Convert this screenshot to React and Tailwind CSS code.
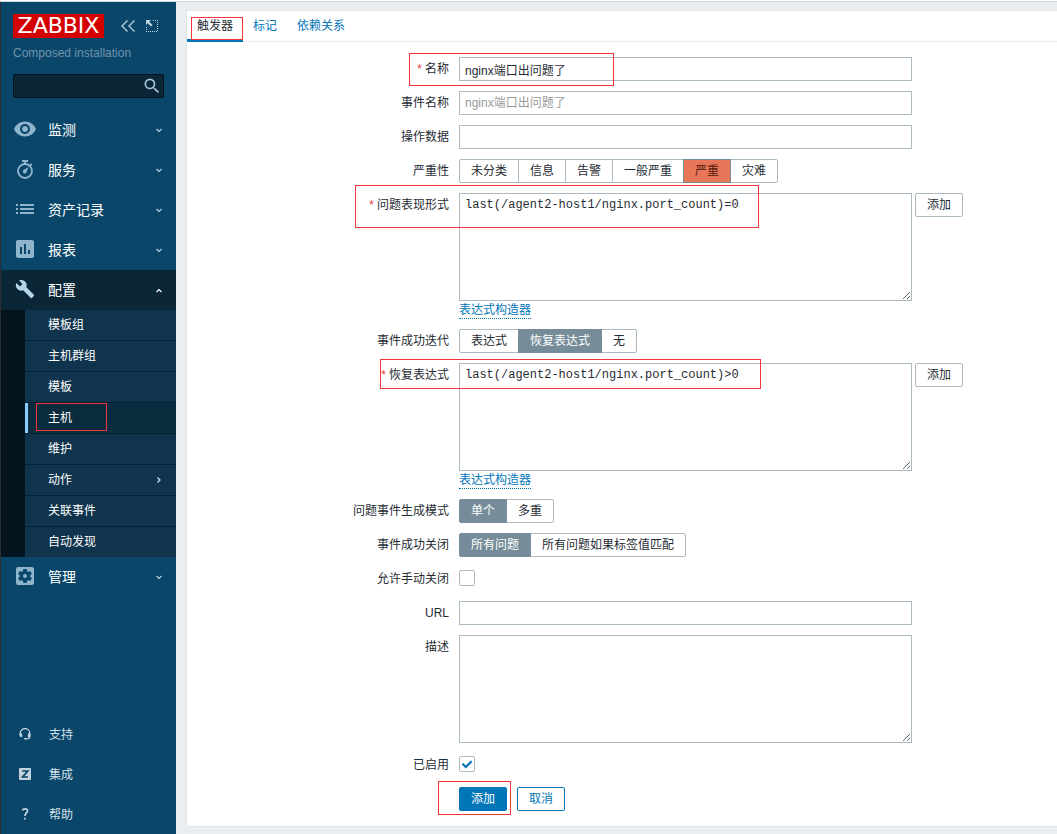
import React from "react";
import { MdVisibility, MdPoll, MdBuild, MdSettingsApplications, MdSearch } from "react-icons/md";

const FIELD = "w-[453px] border border-[#acbbc2] bg-white px-[5px] text-xs text-[#1f2c33] outline-none placeholder:text-[#9a9a9a]";
const LINK = "inline-block border-b border-dotted border-[#0275b8] pt-px leading-4 text-[#0275b8]";
const BUTTON = "h-6 rounded-xs border px-[11px] leading-[22px]";

function Chevron({ dir = "down" }) {
  const paths = {
    down: "M1.5 3 4 5.500l2.500-2.500",
    up: "M1.500 6 4 3.500l2.500 2.500",
    right: "M2.500 1.500 5 4 2.500 6.500",
  };
  return (
    <svg viewBox="0 0 8 8" className="mr-[13px] size-2 shrink-0" fill="none" stroke="currentColor" strokeWidth="1.2" aria-hidden="true">
      <path d={paths[dir]} />
    </svg>
  );
}

function Stopwatch() {
  return (
    <svg viewBox="0 0 24 24" className="size-6" fill="none" stroke="currentColor" strokeWidth="1.800" aria-hidden="true">
      <circle cx="12" cy="14" r="7" />
      <path d="M9 4h6M12 4v3M17.200 8.500l1.600-1.600" />
      <path d="M15.500 10 13.700 14.700a1.900 1.900 0 1 1-2.700-1.900z" fill="currentColor" stroke="none" />
    </svg>
  );
}

function List() {
  return (
    <svg viewBox="0 0 24 24" className="size-6" fill="currentColor" aria-hidden="true">
      <path d="M3 7h2v2H3zM7 7h14v2H7zM3 11h2v2H3zM7 11h14v2H7zM3 15h2v2H3zM7 15h14v2H7z" />
    </svg>
  );
}

function Headset() {
  return (
    <svg viewBox="0 0 12 12" className="size-3" fill="none" stroke="currentColor" strokeWidth="1.300" aria-hidden="true">
      <path d="M1.200 7V5.200a4.800 4.600 0 0 1 9.600 0V8.500c0 1.600-1.200 2.400-3.600 2.400" />
      <path d="M.6 5.500h2.600v3.600H1.500L.6 8zM8.800 5.500h2.600v3l-1 .6H8.800zM5.200 10.100h2.400v1.500H5.200z" fill="currentColor" stroke="none" />
    </svg>
  );
}

function Integrations() {
  return (
    <svg viewBox="0 0 12 12" className="size-3" aria-hidden="true">
      <rect width="12" height="12" rx="1" fill="currentColor" />
      <path d="M3.200 3h5.600L3.600 9H9" fill="none" stroke="#0a466a" strokeWidth="1.700" />
    </svg>
  );
}

function Question() {
  return (
    <svg viewBox="0 0 12 12" className="size-3" fill="none" stroke="currentColor" strokeWidth="1.700" aria-hidden="true">
      <path d="M3.300 2.200C4 1 5 .9 6 .9c1.500 0 2.500.8 2.500 2.100C8.500 5 6 5 6 8" />
      <path d="M5.100 9.700h1.800v1.900H5.100z" fill="currentColor" stroke="none" />
    </svg>
  );
}

function Highlight({ className }) {
  return <span aria-hidden="true" className={`pointer-events-none absolute border border-[#f5333a] ${className}`} />;
}

function MenuItem({ icon, label, active }) {
  return (
    <a
      href="#"
      aria-expanded={!!active}
      className={`flex h-10 items-center text-sm text-white ${active ? "bg-[#0a2637]" : ""}`}
    >
      <span className={`flex w-[47px] shrink-0 justify-center pb-0.5 ${active ? "text-[#b4d5ea]" : "text-[#8fb5cc]"}`}>{icon}</span>
      <span className="grow">{label}</span>
      <span className={active ? "text-white" : "text-[#b5cedd]"}>
        <Chevron dir={active ? "up" : "down"} />
      </span>
    </a>
  );
}

const SUBMENU = ["模板组", "主机群组", "模板", "主机", "维护", "动作", "关联事件", "自动发现"];

function Sidebar() {
  return (
    <aside className="flex w-44 shrink-0 flex-col border-l border-[#2a2d31] bg-[#0a466a] pt-3">
      <div className="flex h-6 items-center pl-3">
        <a href="#" className="flex h-6 w-[91px] items-center justify-center bg-[#d40000] font-['DejaVu_Sans'] text-[22px] leading-6 text-white">
          ZABBIX
        </a>
        <button type="button" aria-label="收起侧边栏" className="ml-4 text-[#a3c2d4]">
          <svg viewBox="0 0 16 16" className="size-4" fill="none" stroke="currentColor" strokeWidth="1.500" aria-hidden="true">
            <path d="M7.500 2.500 2 8l5.500 5.500M14.500 2.500 9 8l5.500 5.500" />
          </svg>
        </button>
        <button type="button" aria-label="隐藏侧边栏" className="ml-2 text-[#bcd3e0]">
          <svg viewBox="0 0 16 16" className="size-4" fill="currentColor" aria-hidden="true">
            <path d="M2 2h5L5.300 3.700 8.500 6.900 6.900 8.500 3.700 5.300 2 7z" />
            <path d="M9 2.500h5M13.500 4v10M2.500 9v5M4 13.500h9" fill="none" stroke="currentColor" strokeDasharray="1 1" />
          </svg>
        </button>
      </div>
      <p className="mt-[7px] pl-3 text-xs leading-4 text-[#6f93aa]">Composed installation</p>
      <form className="relative mx-3 mt-[13px] mb-3" role="search">
        <input
          type="text"
          aria-label="搜索"
          className="block h-6 w-[151px] rounded-xs border border-[#04141f] bg-[#0a2637] px-[5px] text-xs text-white outline-none"
        />
        <button type="button" aria-label="搜索" className="absolute top-0.5 left-[129px] text-[#a3c2d4]">
          <MdSearch size={20} />
        </button>
      </form>
      <nav>
        <MenuItem icon={<MdVisibility size={24} />} label="监测" />
        <MenuItem icon={<Stopwatch />} label="服务" />
        <MenuItem icon={<List />} label="资产记录" />
        <MenuItem icon={<MdPoll size={24} />} label="报表" />
        <MenuItem icon={<MdBuild size={20} />} label="配置" active />
        <ul className="bg-[#04141e] pl-6 text-xs text-white">
          {SUBMENU.map((name) => (
            <li key={name} className="border-b border-[#06202f] last:border-b-0">
              <a
                href="#"
                className={`relative flex h-[30px] items-center ${
                  name === "主机" ? "border-l-3 border-[#87cefa] bg-[#0b2b3f] pl-5" : "bg-[#10344d] pl-[23px]"
                }`}
              >
                <span className="grow">{name}</span>
                {name === "动作" && (
                  <span className="text-[#d5e1e8]">
                    <Chevron dir="right" />
                  </span>
                )}
                {name === "主机" && <Highlight className="top-0 left-2 h-7 w-[71px]" />}
              </a>
            </li>
          ))}
        </ul>
        <MenuItem icon={<MdSettingsApplications size={24} />} label="管理" />
      </nav>
      <nav className="mt-auto text-xs text-[#d3e0e8]">
        {[
          ["支持", <Headset />],
          ["集成", <Integrations />],
          ["帮助", <Question />],
        ].map(([name, icon]) => (
          <a key={name} href="#" className="flex h-10 items-center">
            <span className="flex w-12 justify-center text-[#c3d4df]">{icon}</span>
            <span className="pt-0.5">{name}</span>
          </a>
        ))}
      </nav>
    </aside>
  );
}

function Row({ label, htmlFor, required, children }) {
  const text = (
    <>
      {required && <span className="mr-[3px] text-[#e33734]">*</span>}
      {label}
    </>
  );
  const cls = "text-right leading-6";
  return (
    <div className="grid grid-cols-[262px_1fr] gap-x-2.5">
      {htmlFor ? (
        <label htmlFor={htmlFor} className={cls}>{text}</label>
      ) : (
        <span className={cls}>{text}</span>
      )}
      <div className="relative min-h-6">{children}</div>
    </div>
  );
}

function Segmented({ name, label, options, selected, severity }) {
  return (
    <div role="radiogroup" aria-label={label} className="flex">
      {options.map((option) => (
        <label key={option} className="group relative -ml-px first:ml-0 has-checked:z-10">
          <input type="radio" name={name} defaultChecked={option === selected} className="peer sr-only" />
          <span
            className={`block h-6 border border-[#acbbc2] px-[11px] leading-[22px] group-first:rounded-l-xs group-last:rounded-r-xs peer-checked:border-[#768d99] ${
              severity ? "peer-checked:bg-[#e97659] peer-checked:text-[#52190b]" : "peer-checked:bg-[#768d99] peer-checked:text-white"
            }`}
          >
            {option}
          </span>
        </label>
      ))}
    </div>
  );
}

function Checkbox({ id, checked }) {
  return (
    <div className="relative w-4 pt-[3px]">
      <input
        id={id}
        type="checkbox"
        defaultChecked={checked}
        className="peer block size-4 appearance-none rounded-xs border border-[#acbbc2] bg-white"
      />
      <svg
        viewBox="0 0 16 16"
        className="pointer-events-none absolute top-[3px] left-0 hidden size-4 peer-checked:block"
        fill="none"
        stroke="#0275b8"
        strokeWidth="2.200"
        aria-hidden="true"
      >
        <path d="M3.500 7.800 6.800 11l5.900-5.800" />
      </svg>
    </div>
  );
}

function Expression({ id, value, children }) {
  return (
    <>
      <div className="flex items-start gap-[3px]">
        <textarea id={id} defaultValue={value} spellCheck="false" className={`${FIELD} block h-[108px] py-[3px] font-['Liberation_Mono',monospace] leading-4`} />
        <button type="button" className={`${BUTTON} border-[#acbbc2]`}>添加</button>
      </div>
      <div className="flex h-[18px] items-start">
        <a href="#" className={LINK}>表达式构造器</a>
      </div>
      {children}
    </>
  );
}

export default function App() {
  return (
    <div className="flex min-h-screen flex-col bg-[#ebeef0] font-['Liberation_Sans','Noto_Sans_CJK_SC',sans-serif] text-xs text-[#1f2c33]">
      <div className="h-0.5 border-b border-[#d6d9db] bg-white" />
      <div className="flex grow">
        <Sidebar />
        <main className="grow pt-2 pb-[7px] pl-2.5">
          <div className="border-y border-l border-[#dfe4e7] bg-white">
            <div role="tablist" className="flex h-[31px] border-b border-[#ebebeb]">
              <button type="button" role="tab" aria-selected="true" className="relative -mb-px border-b-3 border-[#0275b8] px-2.5 pt-0.5">
                触发器
                <Highlight className="top-[6px] left-1 h-[23px] w-[52px]" />
              </button>
              <button type="button" role="tab" aria-selected="false" className="px-2.5 text-[#0275b8]">标记</button>
              <button type="button" role="tab" aria-selected="false" className="px-2.5 text-[#0275b8]">依赖关系</button>
            </div>
            <form className="flex flex-col gap-2.5 py-[15px]">
              <Row label="名称" htmlFor="name" required>
                <input id="name" type="text" defaultValue="nginx端口出问题了" className={`${FIELD} block h-6`} />
                <Highlight className="-top-1 -left-[50px] h-[33px] w-[205px]" />
              </Row>
              <Row label="事件名称" htmlFor="event-name">
                <input id="event-name" type="text" placeholder="nginx端口出问题了" className={`${FIELD} block h-6`} />
              </Row>
              <Row label="操作数据" htmlFor="opdata">
                <input id="opdata" type="text" className={`${FIELD} block h-6`} />
              </Row>
              <Row label="严重性">
                <Segmented name="severity" label="严重性" severity options={["未分类", "信息", "告警", "一般严重", "严重", "灾难"]} selected="严重" />
              </Row>
              <Row label="问题表现形式" htmlFor="expression" required>
                <Expression id="expression" value="last(/agent2-host1/nginx.port_count)=0">
                  <Highlight className="-top-2 -left-[104px] h-[43px] w-[404px]" />
                </Expression>
              </Row>
              <Row label="事件成功迭代">
                <Segmented name="recovery-mode" label="事件成功迭代" options={["表达式", "恢复表达式", "无"]} selected="恢复表达式" />
              </Row>
              <Row label="恢复表达式" htmlFor="recovery" required>
                <Expression id="recovery" value="last(/agent2-host1/nginx.port_count)>0">
                  <Highlight className="-top-1 -left-[79px] h-[30px] w-[381px]" />
                </Expression>
              </Row>
              <Row label="问题事件生成模式">
                <Segmented name="mode" label="问题事件生成模式" options={["单个", "多重"]} selected="单个" />
              </Row>
              <Row label="事件成功关闭">
                <Segmented name="close" label="事件成功关闭" options={["所有问题", "所有问题如果标签值匹配"]} selected="所有问题" />
              </Row>
              <Row label="允许手动关闭" htmlFor="manual-close">
                <Checkbox id="manual-close" />
              </Row>
              <Row label="URL" htmlFor="url">
                <input id="url" type="text" className={`${FIELD} block h-6`} />
              </Row>
              <Row label="描述" htmlFor="description">
                <textarea id="description" className={`${FIELD} block h-[108px] py-[3px]`} />
              </Row>
              <Row label="已启用" htmlFor="enabled">
                <Checkbox id="enabled" checked />
              </Row>
              <Row>
                <div className="flex gap-2.5">
                  <button type="button" className={`${BUTTON} border-[#0275b8] bg-[#0275b8] text-white`}>添加</button>
                  <button type="button" className={`${BUTTON} border-[#0275b8] text-[#0275b8]`}>取消</button>
                </div>
                <Highlight className="-top-1.5 -left-[21px] h-[34px] w-[73px]" />
              </Row>
            </form>
          </div>
        </main>
      </div>
    </div>
  );
}
